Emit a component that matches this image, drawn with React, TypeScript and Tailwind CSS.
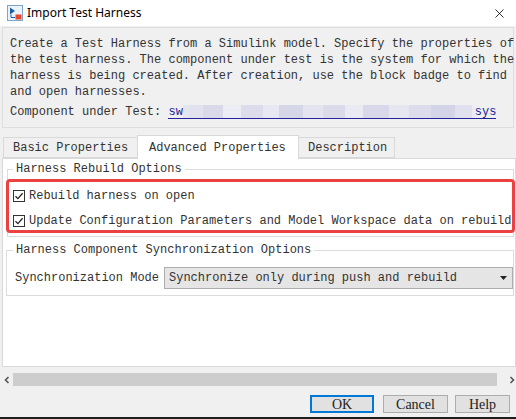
import { X } from "lucide-react";

const mosaic = [
  "bg-[#e2e2ef] w-[14px]",
  "bg-[#d9d9ea] w-[20px]",
  "bg-[#ececf4] w-[18px]",
  "bg-[#dcdcec] w-[22px]",
  "bg-[#e8e8f2] w-[16px]",
  "bg-[#d6d6e9] w-[24px]",
  "bg-[#e4e4f0] w-[20px]",
  "bg-[#dadaeb] w-[22px]",
  "bg-[#eaeaf3] w-[18px]",
  "bg-[#d8d8ea] w-[26px]",
  "bg-[#e6e6f1] w-[20px]",
  "bg-[#dcdcec] w-[22px]",
  "bg-[#d4d4e8] w-[24px]",
  "bg-[#e0e0ee] w-[17px]",
];

function Check() {
  return (
    <span className="w-[12px] h-[12px] border border-[#333] bg-white flex items-center justify-center shrink-0">
      <svg width="10" height="10" viewBox="0 0 10 10">
        <path d="M1.5 5.2l2.4 2.4L8.6 2.2" fill="none" stroke="#222" strokeWidth="1.3" />
      </svg>
    </span>
  );
}

function AppIcon() {
  return (
    <svg width="17" height="17" viewBox="0 0 17 17">
      <rect x="0.5" y="0.5" width="15" height="15" fill="#eaf3fb" stroke="#7ea6c8" />
      <path d="M3 2.5v7l5-3.5z" fill="#1c5fa8" />
      <path d="M4 9.5v3h4" fill="none" stroke="#1c5fa8" strokeWidth="1" />
      <rect x="8.5" y="9.5" width="6" height="5" fill="#e8492a" />
    </svg>
  );
}

export default function App() {
  return (
    <div className="w-[516px] h-[419px] bg-[#f0f0f0] flex flex-col overflow-hidden font-['Liberation_Mono',monospace] text-[12px] text-[#333] relative">
      {/* title bar */}
      <div className="h-[26px] bg-white flex items-center pl-[7px] pr-[9px] shrink-0">
        <AppIcon />
        <span className="ml-[3px] font-['Noto_Sans',sans-serif] text-[12px] text-black">Import Test Harness</span>
        <span className="flex-1" />
        <X size={15} strokeWidth={1.3} className="text-black" />
      </div>

      {/* description */}
      <div className="mt-[1px] mx-[2px] h-[101px] border border-[#dedede] bg-[#f0f0f0] pl-[7px] pt-[8px] shrink-0">
        <div className="leading-[16px] whitespace-pre">
          <div>Create a Test Harness from a Simulink model. Specify the properties of</div>
          <div>the test harness. The component under test is the system for which the</div>
          <div>harness is being created. After creation, use the block badge to find</div>
          <div>and open harnesses.</div>
        </div>
        <div className="mt-[5px] flex items-center leading-[14px] whitespace-pre">
          <span>Component under Test: </span>
          <span className="flex h-[14px] border-b border-[#23239e] text-[#23239e]">
            <span>sw</span>
            <span className="flex w-[6px] bg-[#e6e6f0]" />
            {mosaic.map((c, i) => (
              <span key={i} className={c} />
            ))}
            <span className="flex w-[3px] bg-[#ececf4]" />
            <span>sys</span>
          </span>
        </div>
      </div>

      {/* tabs */}
      <div className="mt-[7px] pl-[3px] flex items-end h-[23px] shrink-0 relative z-10">
        <div className="w-[135px] h-[21px] border border-[#d9d9d9] bg-[#f0f0f0] pl-[9px] flex items-center">
          Basic Properties
        </div>
        <div className="-ml-px w-[162px] h-[24px] -mb-px border border-b-0 border-[#d9d9d9] bg-white pl-[11px] flex items-center">
          Advanced Properties
        </div>
        <div className="-ml-px w-[97px] h-[21px] border border-[#d9d9d9] bg-[#f0f0f0] pl-[9px] flex items-center">
          Description
        </div>
      </div>

      {/* tab content */}
      <div className="ml-[2px] h-[209px] border border-[#d9d9d9] bg-white relative shrink-0">
        <fieldset className="ml-[4px] mr-[1px] mt-[2px] border border-[#dcdcdc] pl-[5px] pt-[6px] pb-[3px]">
          <legend className="px-[3px] leading-[16px]">Harness Rebuild Options</legend>
          <div className="h-[25px] flex items-center gap-[4px] whitespace-pre">
            <Check />
            <span>Rebuild harness on open</span>
          </div>
          <div className="h-[25px] flex items-center gap-[4px] whitespace-pre">
            <Check />
            <span>Update Configuration Parameters and Model Workspace data on rebuild</span>
          </div>
        </fieldset>

        <fieldset className="ml-[3px] mr-[1px] mt-[5px] border border-[#dcdcdc] pl-[8px] pt-[9px] pb-[6px]">
          <legend className="-ml-[2px] px-[3px] leading-[16px]">Harness Component Synchronization Options</legend>
          <div className="flex items-center whitespace-pre">
            <span className="w-[149px]">Synchronization Mode</span>
            <div className="w-[349px] h-[22px] border border-[#adadad] bg-[#e5e5e5] flex items-center pl-[4px] pr-[5px]">
              <span className="flex-1">Synchronize only during push and rebuild</span>
              <svg width="7" height="4" viewBox="0 0 7 4">
                <path d="M0 0h7L3.5 4z" fill="#222" />
              </svg>
            </div>
          </div>
        </fieldset>

        {/* annotation */}
        <div className="absolute left-[3px] top-[20px] w-[509px] h-[54px] border-[3px] border-[#ec4141] rounded-[4px]" />
      </div>

      {/* scrollbar */}
      <div className="mt-[6px] h-[13px] flex items-center shrink-0">
        <div className="w-[13px] flex justify-center">
          <svg width="6" height="8" viewBox="0 0 6 8">
            <path d="M4.5 1L1.5 4l3 3" fill="none" stroke="#555" strokeWidth="1.6" />
          </svg>
        </div>
        <div className="w-[484px] h-[13px] bg-[#cdcdcd]" />
        <div className="flex-1 flex justify-end pr-[1px]">
          <svg width="6" height="8" viewBox="0 0 6 8">
            <path d="M1.5 1l3 3-3 3" fill="none" stroke="#555" strokeWidth="1.6" />
          </svg>
        </div>
      </div>

      {/* buttons */}
      <div className="mt-[9px] h-[18px] flex pl-[310px] shrink-0 font-['Liberation_Serif',serif] text-[14px] text-[#222]">
        <div className="w-[64px] h-[18px] border-2 border-[#0078d7] bg-[#e1e1e1] flex items-center justify-center">OK</div>
        <div className="ml-[9px] w-[65px] h-[18px] border border-[#adadad] bg-[#e1e1e1] flex items-center justify-center">Cancel</div>
        <div className="ml-[7px] w-[55px] h-[18px] border border-[#adadad] bg-[#e1e1e1] flex items-center justify-center">Help</div>
      </div>

      <div className="flex-1" />
      <div className="h-[2px] bg-[#1e1e1e] shrink-0" />
    </div>
  );
}
